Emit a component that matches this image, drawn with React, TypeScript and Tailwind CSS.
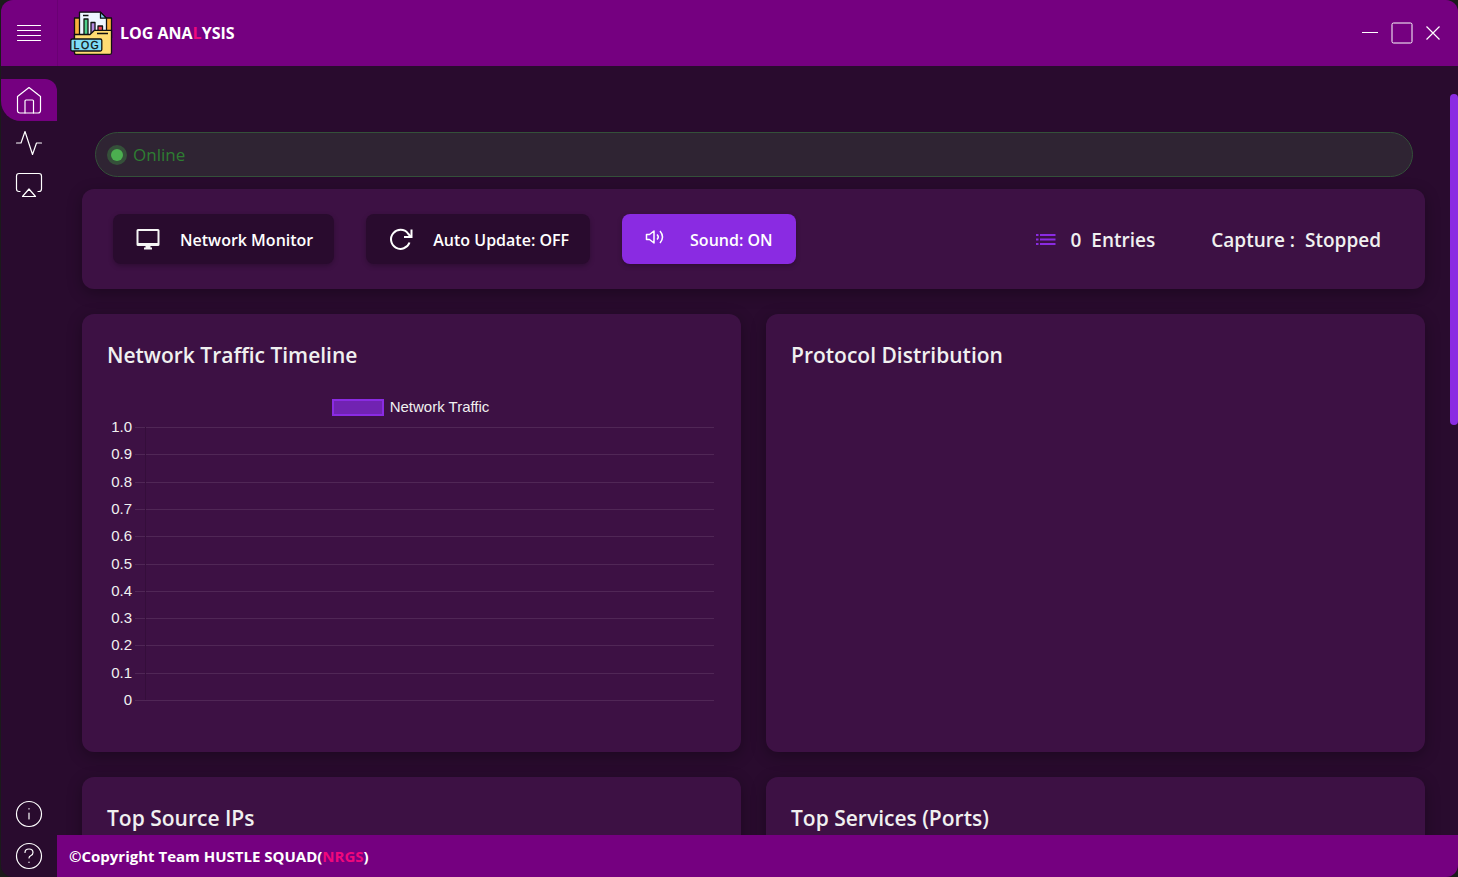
import type { ReactNode } from "react";

const TICKS = ["1.0", "0.9", "0.8", "0.7", "0.6", "0.5", "0.4", "0.3", "0.2", "0.1", "0"];
const CHART_TOP = 10;
const CHART_SPAN = 273;

function Thin({ children }: { children: ReactNode }) {
  return (
    <svg
      viewBox="0 0 28 28"
      className="size-7"
      fill="none"
      stroke="#ffffff"
      strokeWidth="1.2"
      strokeLinejoin="round"
      strokeLinecap="round"
      aria-hidden="true"
    >
      {children}
    </svg>
  );
}

function NavItem({ label, active, children }: { label: string; active?: boolean; children: ReactNode }) {
  return (
    <button
      type="button"
      aria-label={label}
      className={
        active
          ? "flex h-[42px] w-full items-center justify-center rounded-tr-xl rounded-bl-[20px] bg-[#750080]"
          : "flex h-[42px] w-full items-center justify-center"
      }
    >
      {children}
    </button>
  );
}

function Logo() {
  return (
    <svg viewBox="0 0 43 46" className="h-[46px] w-[43px]" stroke="#111111" strokeWidth="1.3" strokeLinejoin="round" aria-hidden="true">
      <path d="M4.5 8h37v20h-37z" fill="#f9b03c" />
      <path d="M9.5 2.2h21l6 6V28h-27z" fill="#eef6ff" />
      <path d="M30.5 2.2v6h6z" fill="#7fd0f5" />
      <path d="M13 5.5h5.5" fill="none" />
      <path d="M14 9h4v17h-4z" fill="#4fd08c" />
      <path d="M21 12.5h4V26h-4z" fill="#b48ae0" />
      <path d="M28 16h4.5v8h-4.5z" fill="#f0405a" />
      <path d="M4.5 24.5h15.5l4.5-4.2h17v22.5q0 1.5-1.5 1.5H6q-1.5 0-1.5-1.5z" fill="#ffdc72" />
      <path d="M27 23.5h11" fill="none" />
      <rect x="0.8" y="29" width="31" height="12" rx="1.5" fill="#7fdcf7" />
      <text y="38.7" fontFamily="Liberation Sans, sans-serif" fontSize="10.5" fill="#111111" strokeWidth="0.3">
        <tspan x="3.5">L</tspan>
        <tspan x="11">O</tspan>
        <tspan x="20.5">G</tspan>
      </text>
    </svg>
  );
}

function Panel({ title, children }: { title: string; children?: ReactNode }) {
  return (
    <section className="h-[438px] rounded-xl bg-[#3d1144] p-[25px] shadow-[0_4px_15px_rgba(0,0,0,0.3)]">
      <h2 className="text-[21px] leading-8 font-semibold">{title}</h2>
      {children}
    </section>
  );
}

function TrafficChart() {
  return (
    <div className="mt-[26px] font-['Liberation_Sans',Arial,sans-serif] text-[15px]">
      <div className="flex h-5 items-center justify-center gap-[6px] pr-[2px] leading-5">
        <span className="h-[17px] w-[52px] border-2 border-[#8a2be2] bg-[#7123b2]" />
        <span>Network Traffic</span>
      </div>
      <svg className="block h-[310px] w-full pr-[2px]" role="img" aria-label="Network traffic over time">
        {TICKS.map((t, i) => {
          const y = Math.round(CHART_TOP + (i * CHART_SPAN) / 10);
          return (
            <g key={t}>
              <text x="25" y={y + 5} textAnchor="end" fill="#f0f0f0">
                {t}
              </text>
              <line x1="28" x2="100%" y1={y + 0.5} y2={y + 0.5} stroke="#502756" />
            </g>
          );
        })}
        <line x1="38.5" x2="38.5" y1="10" y2="283" stroke="#350e3b" />
      </svg>
    </div>
  );
}

const toolButton =
  "flex h-[50px] items-center rounded-lg text-base font-semibold text-white shadow-[0_2px_5px_rgba(0,0,0,0.25)]";

export default function App() {
  return (
    <div className="h-screen bg-[#1b1b1b] pl-px font-['Open_Sans','Noto_Sans',sans-serif] text-[#f0f0f0]">
      <div className="flex h-full flex-col overflow-hidden rounded-xl bg-[#290b2e]">
        <header className="flex h-[66px] shrink-0 items-center bg-[#750080]">
          <button type="button" aria-label="Menu" className="flex h-full w-14 items-center justify-center">
            <Thin>
              <path d="M2.5 6.5h23M2.5 11.5h23M2.5 16.5h23M2.5 21.5h23" />
            </Thin>
          </button>
          <div className="flex h-full items-center border-l border-[#6a0074] pl-3">
            <Logo />
            <h1 className="ml-[7px] text-base font-bold text-white">
              LOG ANA<span className="text-[#f0087c]">L</span>YSIS
            </h1>
          </div>
          <div className="ml-auto flex items-center gap-3 pr-[17px]">
            <button type="button" aria-label="Minimize">
              <svg viewBox="0 0 18 22" className="h-[22px] w-[18px]" stroke="#ffffff" aria-hidden="true">
                <path d="M1 10.5h16" />
              </svg>
            </button>
            <button type="button" aria-label="Maximize">
              <svg viewBox="0 0 22 22" className="size-[22px]" fill="none" stroke="#ffffff" aria-hidden="true">
                <rect x="1" y="1" width="20" height="20" rx="1.5" />
              </svg>
            </button>
            <button type="button" aria-label="Close">
              <svg viewBox="0 0 16 22" className="h-[22px] w-4" stroke="#ffffff" strokeWidth="1.2" aria-hidden="true">
                <path d="M1.5 4.5l13 13M14.5 4.5l-13 13" />
              </svg>
            </button>
          </div>
        </header>

        <div className="flex min-h-0 flex-1">
          <nav className="flex w-14 shrink-0 flex-col pt-[13px]">
            <NavItem label="Home" active>
              <Thin>
                <path d="M2.5 10.5L14 1.5l11.5 9v14q0 2.5-2.5 2.5H5q-2.5 0-2.5-2.5z" />
                <path d="M10 27V15q0-1 1-1h6.5q1 0 1 1v12" />
              </Thin>
            </NavItem>
            <NavItem label="Activity">
              <Thin>
                <path d="M1.5 15H6l4-11.5 7.5 23L21.5 15h5" />
              </Thin>
            </NavItem>
            <NavItem label="Cast">
              <Thin>
                <path d="M5 21.5H4q-2.5 0-2.5-2.5V6q0-2.5 2.5-2.5h20q2.5 0 2.5 2.5v13q0 2.5-2.5 2.5h-1" />
                <path d="M14 19l6.5 7.5h-13z" />
              </Thin>
            </NavItem>
            <div className="mt-auto">
              <NavItem label="Information">
                <Thin>
                  <circle cx="14" cy="14" r="12.5" />
                  <path d="M14 13v6M14 8.5v0.5" />
                </Thin>
              </NavItem>
              <NavItem label="Help">
                <Thin>
                  <circle cx="14" cy="14" r="12.5" />
                  <path d="M10 10.5q0-3.5 4-3.5t4 3.5q0 2-2 3t-2 2.5M14 20v0.5" />
                </Thin>
              </NavItem>
            </div>
          </nav>

          <div className="flex min-w-0 flex-1 flex-col">
            <div className="flex min-h-0 flex-1 pt-7">
              <main className="min-w-0 flex-1 overflow-y-auto px-[25px] pt-[38px] [scrollbar-width:none]">
                <div className="ml-[13px] mr-3 flex h-[45px] items-center rounded-full border border-[#34503a] bg-[#2f2433] pl-[15px]">
                  <span className="size-3 rounded-full bg-[#4caf50] ring-4 ring-[#35503a]" />
                  <span className="ml-[10px] text-[17px] font-medium text-[#2e7d32]">Online</span>
                </div>

                <div className="mt-3 flex h-[100px] items-center rounded-xl bg-[#3d1144] px-[31px] shadow-[0_4px_15px_rgba(0,0,0,0.3)]">
                  <div className="flex gap-8">
                    <button type="button" className={toolButton + " gap-5 bg-[#290b2e] pr-[21px] pl-[23px]"}>
                      <svg viewBox="0 0 24 24" className="size-6" aria-hidden="true">
                        <path
                          d="M2 2h20a1.500 1.500 0 0 1 1.500 1.500v14A1.500 1.500 0 0 1 22 19h-7.500v1.500H16v2H8v-2h1.500V19H2A1.500 1.500 0 0 1 .5 17.500v-14A1.500 1.500 0 0 1 2 2zm.5 2v12h19V4z"
                          fill="#f5f5f5"
                          fillRule="evenodd"
                        />
                      </svg>
                      <span className="pt-[2px]">Network Monitor</span>
                    </button>
                    <button type="button" className={toolButton + " gap-5 bg-[#290b2e] pr-[21px] pl-[23px]"}>
                      <svg viewBox="0 0 24 24" className="size-6" fill="none" stroke="#ffffff" strokeWidth="2" aria-hidden="true">
                        <path d="M20.5 15.5a9.5 9.5 0 1 1-1.5-9l3 3.5" />
                        <path d="M22.5 2.5V10H15" />
                      </svg>
                      <span className="pt-[2px]">Auto Update: OFF</span>
                    </button>
                    <button type="button" className={toolButton + " gap-[25px] bg-[#8a2be2] px-[23px]"}>
                      <svg viewBox="0 0 20 24" className="h-6 w-5" fill="none" stroke="#ffffff" strokeWidth="1.5" strokeLinejoin="round" aria-hidden="true">
                        <path d="M1.5 7.5h3L9 4v12l-4.5-3.5h-3z" />
                        <path d="M12 7.5q2.5 2.5 0 5M15 4q5 6 0 12" />
                      </svg>
                      <span className="pt-[2px]">Sound: ON</span>
                    </button>
                  </div>
                  <div className="ml-auto flex items-center gap-14 pt-[2px] pr-[13px] text-[19px] font-semibold">
                    <div className="flex items-center">
                      <svg viewBox="0 0 20 14" className="mr-[14px] h-[14px] w-5" stroke="#8a2be2" strokeWidth="2" aria-hidden="true">
                        <path d="M0 2h2.5M4 2h15.5M0 6.5h2.5M4 6.5h15.5M0 11h2.5M4 11h15.5" />
                      </svg>
                      <span>0</span>
                      <span className="ml-[10px]">Entries</span>
                    </div>
                    <div className="flex gap-[10px]">
                      <span>Capture :</span>
                      <span>Stopped</span>
                    </div>
                  </div>
                </div>

                <div className="grid grid-cols-2 gap-[25px] py-[25px]">
                  <Panel title="Network Traffic Timeline">
                    <TrafficChart />
                  </Panel>
                  <Panel title="Protocol Distribution" />
                  <Panel title="Top Source IPs" />
                  <Panel title="Top Services (Ports)" />
                </div>
              </main>
              <div className="w-2 shrink-0" aria-hidden="true">
                <div className="h-[331px] rounded-full bg-[#8a2be2]" />
              </div>
            </div>
            <footer className="flex h-[42px] shrink-0 items-center bg-[#750080] pl-3 text-[15px] font-bold text-white">
              <p>
                ©Copyright Team HUSTLE SQUAD(<span className="text-[#f0087c]">NRGS</span>)
              </p>
            </footer>
          </div>
        </div>
      </div>
    </div>
  );
}
